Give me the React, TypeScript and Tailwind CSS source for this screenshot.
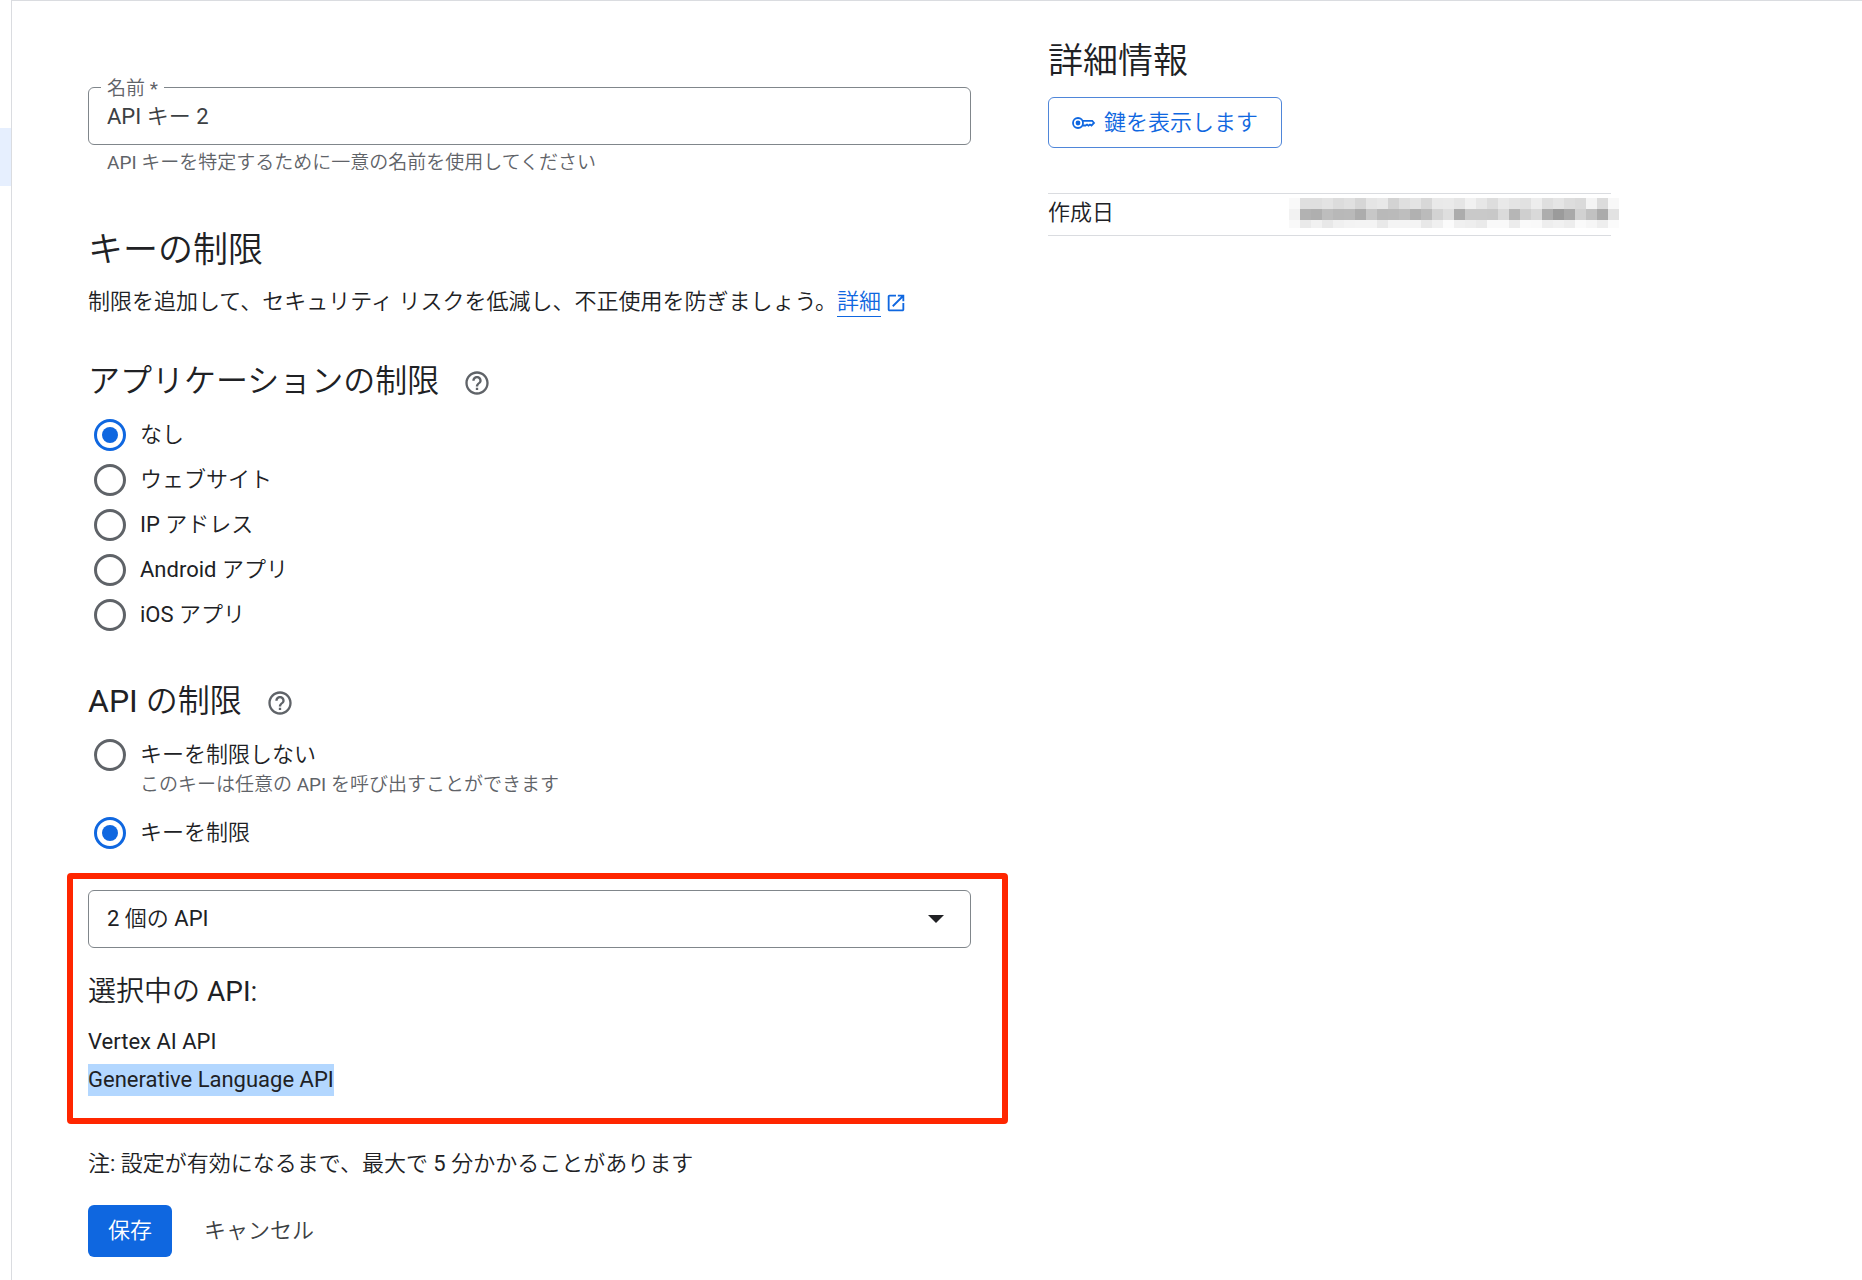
import { useState } from 'react'
import type { ReactNode } from 'react'

/** アプリケーションの制限の選択肢 */
const APP_RESTRICTIONS = [
  { id: 'none', label: 'なし' },
  { id: 'web', label: 'ウェブサイト' },
  { id: 'ip', label: 'IP アドレス' },
  { id: 'android', label: 'Android アプリ' },
  { id: 'ios', label: 'iOS アプリ' },
]

/** 作成日のモザイク（1行30マス、値は明るさ） */
const MOSAIC_ROWS = [
  'f9 df df e3 dc e0 d6 e5 e8 d3 df e4 d8 e9 ea e5 f1 e7 dd e9 e4 e1 ed df e5 dd da f4 dc f8',
  'f2 b2 af bd b8 b9 ac c7 b9 ba be b1 bb d3 de ac c9 c9 c8 da b6 cf d9 ad 9b a9 d1 c1 ab e2',
  'f9 ea f1 e8 f0 f3 f4 f4 e9 f4 f4 f4 e8 f0 fb f0 ee ea f9 f9 ec fa f9 ee f1 ed fa f6 ee fb',
].map((row) => row.split(' '))

const RADIO_CLASS =
  'm-0 grid h-8 w-8 shrink-0 appearance-none place-content-center rounded-full border-3 border-[#5f6368] bg-white before:h-4 before:w-4 before:rounded-full checked:border-[#0f67e0] checked:before:bg-[#0f67e0]'

function HelpIcon() {
  return (
    <svg viewBox="0 0 24 24" className="h-7 w-7" fill="#5f6368" aria-hidden="true">
      <path d="M11 18h2v-2h-2v2zm1-16C6.48 2 2 6.48 2 12s4.48 10 10 10 10-4.48 10-10S17.52 2 12 2zm0 18c-4.41 0-8-3.59-8-8s3.59-8 8-8 8 3.59 8 8-3.59 8-8 8zm0-14c-2.21 0-4 1.79-4 4h2c0-1.1.9-2 2-2s2 .9 2 2c0 2-3 1.75-3 5h2c0-2.25 3-2.5 3-5 0-2.21-1.79-4-4-4z" />
    </svg>
  )
}

function SectionHeading({ children }: { children: ReactNode }) {
  return (
    <div className="flex h-10 items-center gap-6">
      <h3 className="text-[32px] leading-10">{children}</h3>
      <button type="button" aria-label="ヘルプ" className="pt-1">
        <HelpIcon />
      </button>
    </div>
  )
}

export default function App() {
  const [appRestriction, setAppRestriction] = useState('none')
  const [apiRestriction, setApiRestriction] = useState('restrict')

  return (
    <div className="flex min-h-screen bg-white font-[Roboto,'Noto_Sans_CJK_JP_DemiLight','Noto_Sans_CJK_JP',sans-serif] text-[22px] leading-8 text-[#202124]">
      {/* 左端のナビゲーション */}
      <nav className="w-[11px] shrink-0 pt-32" aria-label="ナビゲーション">
        <div className="h-[58px] bg-[#e6effe]" />
      </nav>

      <div className="flex flex-1 items-start border-t border-l border-[#dadce0]">
        {/* キーの編集フォーム */}
        <form className="w-[52%] shrink-0 pr-[3px] pl-[55px]">
          <div className="pt-[86px] pl-[21px]">
            <div className="relative">
              <label
                htmlFor="key-name"
                className="absolute -top-3 left-[13px] bg-white px-1.5 text-[19px] leading-7 text-[#5f6368]"
              >
                名前 *
              </label>
              <input
                id="key-name"
                type="text"
                defaultValue="API キー 2"
                className="block h-[58px] w-full rounded-md border border-[#80868b] bg-transparent px-[18px] pb-1 text-[#3c4043]"
              />
            </div>
            <p className="mt-1 px-[19px] text-[19px] leading-7 text-[#5f6368]">
              API キーを特定するために一意の名前を使用してください
            </p>

            <h2 className="mt-13 text-[35px] leading-11">キーの制限</h2>
            <p className="mt-[13px]">
              制限を追加して、セキュリティ リスクを低減し、不正使用を防ぎましょう。
              <a href="#details" className="inline-flex items-center gap-1 text-[#0f67e0]">
                <span className="border-b border-[#0f67e0] leading-7">詳細</span>
                <svg viewBox="0 0 24 24" className="h-[22px] w-[22px]" fill="currentColor" aria-hidden="true">
                  <path d="M19 19H5V5h7V3H5c-1.11 0-2 .9-2 2v14c0 1.1.89 2 2 2h14c1.1 0 2-.9 2-2v-7h-2v7zM14 3v2h3.59l-9.83 9.83 1.41 1.41L19 6.41V10h2V3h-7z" />
                </svg>
              </a>
            </p>

            <div className="mt-[43px]">
              <SectionHeading>アプリケーションの制限</SectionHeading>
            </div>
            <div className="mt-[18px] flex flex-col gap-[13px] pl-1.5">
              {APP_RESTRICTIONS.map((item) => (
                <label key={item.id} className="flex items-center gap-3.5">
                  <input
                    type="radio"
                    name="app-restriction"
                    checked={appRestriction === item.id}
                    onChange={() => setAppRestriction(item.id)}
                    className={RADIO_CLASS}
                  />
                  {item.label}
                </label>
              ))}
            </div>

            <div className="mt-[50px]">
              <SectionHeading>API の制限</SectionHeading>
            </div>
            <div className="mt-[18px] pl-1.5">
              <label className="flex items-start gap-3.5">
                <input
                  type="radio"
                  name="api-restriction"
                  checked={apiRestriction === 'any'}
                  onChange={() => setApiRestriction('any')}
                  className={RADIO_CLASS}
                />
                <span>
                  キーを制限しない
                  <span className="block text-[19px] leading-7 text-[#5f6368]">
                    このキーは任意の API を呼び出すことができます
                  </span>
                </span>
              </label>
              <label className="mt-[18px] flex items-center gap-3.5">
                <input
                  type="radio"
                  name="api-restriction"
                  checked={apiRestriction === 'restrict'}
                  onChange={() => setApiRestriction('restrict')}
                  className={RADIO_CLASS}
                />
                キーを制限
              </label>
            </div>
          </div>

          {/* 選択中の API（赤枠で強調） */}
          <section className="mt-6 -mr-[37px] rounded-sm border-6 border-[#ff2600] pt-[11px] pr-[31px] pb-[22px] pl-[15px]">
            <div className="relative">
              <select
                aria-label="API を選択"
                className="block h-[58px] w-full appearance-none rounded-md border border-[#80868b] bg-white px-[18px]"
              >
                <option>2 個の API</option>
              </select>
              <svg
                viewBox="0 0 16 8"
                className="pointer-events-none absolute top-[25px] right-[27px] h-2 w-4"
                fill="#202124"
                aria-hidden="true"
              >
                <path d="M0 0h16L8 8z" />
              </svg>
            </div>
            <h4 className="mt-6 text-[28px] leading-10">選択中の API:</h4>
            <ul className="mt-3.5 flex flex-col gap-1.5">
              <li>Vertex AI API</li>
              <li>
                <span className="inline-block bg-[#b3d7ff]">Generative Language API</span>
              </li>
            </ul>
          </section>

          <div className="px-[21px]">
            <p className="mt-6">注: 設定が有効になるまで、最大で 5 分かかることがあります</p>
            <div className="mt-[25px] flex gap-3">
              <button type="submit" className="h-13 rounded-md bg-[#0f67e0] px-5 text-white">
                保存
              </button>
              <button type="button" className="h-13 px-5 text-[#3c4043]">
                キャンセル
              </button>
            </div>
          </div>
        </form>

        {/* 詳細情報 */}
        <aside className="w-[637px] pt-[39px] pl-[74px]">
          <h2 className="text-[35px] leading-11">詳細情報</h2>
          <button
            type="button"
            className="mt-[13px] flex h-[51px] items-center gap-2 rounded-md border border-[#4f86d9] px-[23px] text-[#0f67e0]"
          >
            <svg viewBox="0 0 24 12" className="h-3 w-6" fill="none" stroke="currentColor" strokeWidth="1.8" aria-hidden="true">
              <circle cx="6" cy="6" r="5" />
              <circle cx="6" cy="6" r="2.4" fill="currentColor" stroke="none" />
              <path d="M10.5 3.8H20.2l1.8 2.2-2.500 2.500-1.500-1-1.500 1.200-1.500-1.200-1.500 1H10.500" />
            </svg>
            鍵を表示します
          </button>
          <table className="mt-[45px] w-full table-fixed border-y border-[#dadce0]">
            <tbody>
              <tr>
                <th className="h-[42px] w-[241px] pb-1 text-left font-normal">作成日</th>
                <td className="pt-1 align-top">
                  <div className="w-[330px]" role="img" aria-label="非表示の作成日">
                    {MOSAIC_ROWS.map((row, y) => (
                      <div key={y} className="flex h-[11px] last:h-2">
                        {row.map((v, x) => (
                          <span key={x} className="w-[11px]" style={{ backgroundColor: `#${v}${v}${v}` }} />
                        ))}
                      </div>
                    ))}
                  </div>
                </td>
              </tr>
            </tbody>
          </table>
        </aside>
      </div>
    </div>
  )
}
